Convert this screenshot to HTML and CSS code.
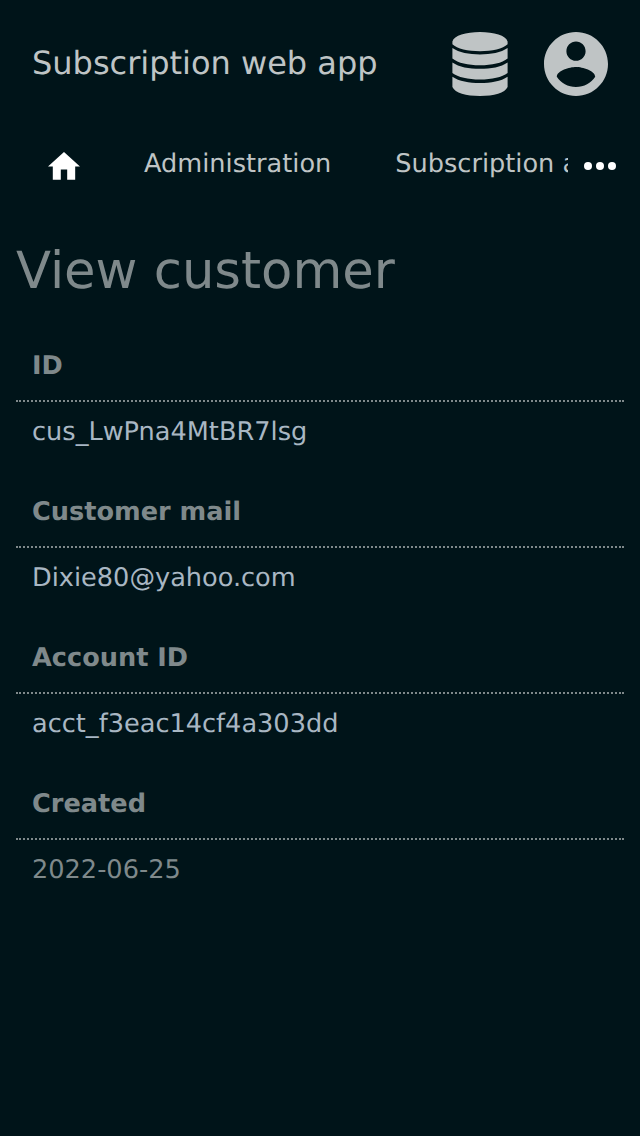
FILE: index.html
```html
<!DOCTYPE html>
<html lang="en">
<head>
<meta charset="utf-8">
<title>Subscription web app</title>
<link rel="stylesheet" href="styles.css">
</head>
<body>
<header class="header">
  <div class="brand">Subscription web app</div>
  <svg class="database" viewBox="0 0 56 64"><path d="M.4 9.500C2 3.500 14 0 28 0s26 3.500 27.600 9.500v2.800C51 16.800 40 19.200 28 19.200S5 16.800 .4 12.300zM.4 16C7 20.500 17 22.400 28 22.400s21-1.900 27.600-6.400V26.500C50 31 40 33.300 28 33.300S6 31 .4 26.500zM.4 30.400C7 35 17 36.800 28 36.800s21-1.800 27.600-6.400V41C50 45.300 40 47.500 28 47.500S6 45.300 .4 41zM.4 44.800C7 49.300 17 51.100 28 51.100s21-1.800 27.600-6.300V55C53 61 42 64 28 64S3 61 .4 55z"/></svg>
  <svg class="account" viewBox="2 2 20 20"><path d="M12 2C6.48 2 2 6.48 2 12s4.480 10 10 10 10-4.480 10-10S17.520 2 12 2zm0 3c1.660 0 3 1.340 3 3s-1.340 3-3 3-3-1.340-3-3 1.340-3 3-3zm0 14.200c-2.500 0-4.710-1.280-6-3.220.03-1.990 4-3.080 6-3.080 1.990 0 5.970 1.090 6 3.080-1.290 1.940-3.500 3.220-6 3.220z"/></svg>
</header>
<nav class="nav">
  <a class="home"><svg viewBox="2 3 20 18"><path d="M10 20.300v-6.300h4v6.300h5v-8.300h3L12 3 2 12h3v8.300z"/></svg></a>
  <a class="administration">Administration</a>
  <a class="clipped">Subscription administration</a>
  <svg class="more" viewBox="0 0 32 8"><circle cx="4" cy="4" r="4"/><circle cx="16" cy="4" r="4"/><circle cx="28" cy="4" r="4"/></svg>
</nav>
<main class="main">
  <h1 class="title">View customer</h1>
  <dl class="details">
    <dt>ID</dt><dd>cus_LwPna4MtBR7lsg</dd>
    <dt>Customer mail</dt><dd>Dixie80@yahoo.com</dd>
    <dt>Account ID</dt><dd>acct_f3eac14cf4a303dd</dd>
    <dt>Created</dt><dd class="date">2022-06-25</dd>
  </dl>
</main>
</body>
</html>
```
FILE: styles.css
```css
body { margin: 0; min-height: 1136px; background: #001419; color: #bfc4c5; font: 25.6px/36px "DejaVu Sans", sans-serif; text-rendering: geometricPrecision; }
svg { display: block; fill: currentColor; flex: none; }
.header { display: flex; align-items: center; height: 128px; padding: 0 32px; box-sizing: border-box; }
.brand { flex: 1; padding-bottom: 2px; font-size: 32px; line-height: 36px; }
.database { width: 56px; height: 64px; margin-right: 36px; }
.account { width: 64px; height: 64px; }
.nav { display: flex; height: 72px; padding: 18px 24px 0 48px; box-sizing: border-box; white-space: nowrap; }
.home { width: 32px; margin: 6px 64px 0 0; color: #fff; }
.administration { margin-right: 64px; }
.clipped { width: 173px; overflow: hidden; }
.more { width: 32px; height: 8px; margin: 16px 0 0 auto; color: #fff; }
.main { padding: 35px 16px 0; }
.title { margin: 0; font-size: 51.2px; line-height: 72px; font-weight: 400; color: #7f898b; }
.details { margin: 25px 0 0; }
.details dt { height: 70px; padding: 16px 16px 0; box-sizing: border-box; border-bottom: 2px dotted #7f898b; font-weight: 700; color: #7f898b; }
.details dd { height: 76px; margin: 0; padding: 12px 16px 0; box-sizing: border-box; color: #a9b7c3; }
.details .date { color: #7f898b; }
```
